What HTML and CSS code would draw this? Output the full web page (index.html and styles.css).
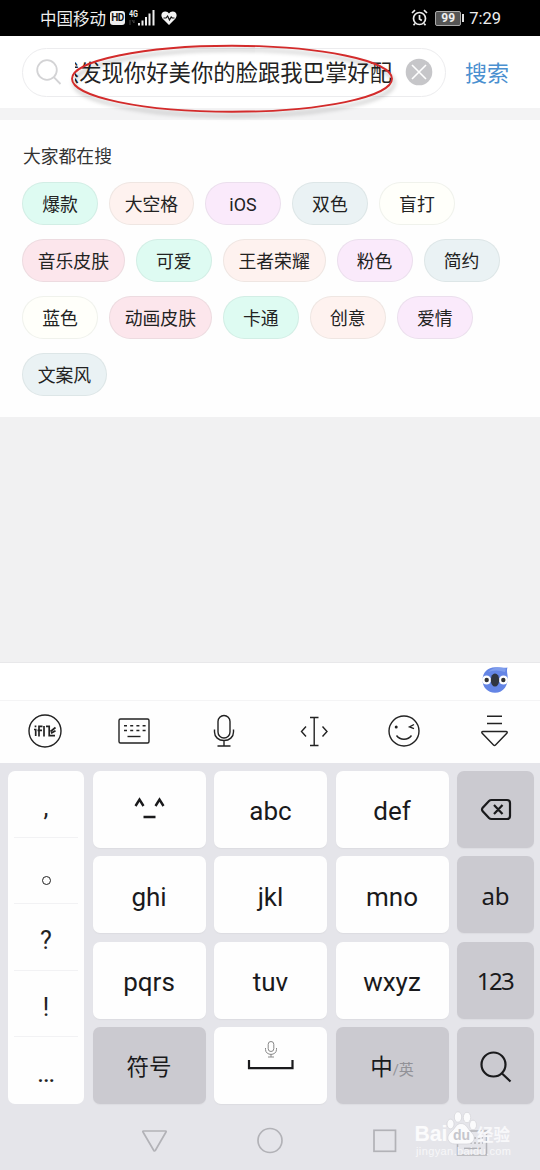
FILE: index.html
```html
<!DOCTYPE html>
<html lang="zh-CN">
<head>
<meta charset="utf-8">
<title>搜索</title>
<link rel="stylesheet" href="styles.css">
</head>
<body>
<div class="phone">
  <header class="status">
    <div class="status-left">
      <span class="carrier">中国移动</span>
      <span class="hd">HD</span>
      <svg class="signal" width="27" height="20" viewBox="0 0 27 20">
        <text x="0" y="8.5" class="net" textLength="9" lengthAdjust="spacingAndGlyphs">4G</text>
        <path d="M1 12v5M3 12l2 3M5 12v3" stroke="#444" fill="none"/>
        <path d="M10 15v2.500M13.500 12.500v5M17 9v8.500M20.500 5.500v12M24.500 2v15.500" stroke="#eee" stroke-width="2"/>
      </svg>
      <svg class="heart" width="16" height="15" viewBox="0 0 16 15">
        <path d="M8 14 1.500 7.500C-1 4 1 .5 4.300.5 6 .5 7.200 1.300 8 2.500 8.800 1.300 10 .5 11.700.5 15 .5 17 4 14.500 7.500Z" fill="#f4f4f4"/>
        <path d="M2.500 7H5l1.600-2L8.500 9l1.700-3 1 1h2.300" fill="none" stroke="#111" stroke-width="1.200"/>
      </svg>
    </div>
    <div class="status-right">
      <svg width="17" height="18" viewBox="0 0 17 18" fill="none" stroke="#eee" stroke-width="1.700">
        <circle cx="8.500" cy="9.500" r="6"/><path d="M8.500 6v4l2.300 1.500M1 4l3-2.800M16 4l-3-2.800M4 14.500l-1.500 1.800M13 14.500l1.500 1.800"/>
      </svg>
      <span class="battery">99</span><span class="battery-tip"></span>
      <span class="clock">7:29</span>
    </div>
  </header>

  <div class="search-bar">
    <div class="search-box">
      <svg class="search-icon" width="26" height="28" viewBox="0 0 26 28" fill="none" stroke="#d3d3d5" stroke-width="1.800">
        <circle cx="11" cy="12" r="9.800"/><path d="M17.800 19.200 24.500 26"/>
      </svg>
      <div class="query"><span>然发现你好美你的脸跟我巴掌好配</span></div>
      <svg class="clear" width="28" height="28" viewBox="0 0 28 28">
        <circle cx="14" cy="14" r="13.300" fill="#c6c6c9"/>
        <path d="m7 7 14 14M21 7 7 21" stroke="#fff" stroke-width="1.600"/>
      </svg>
    </div>
    <span class="search-action">搜索</span>
    <svg class="annotation" width="332" height="80" viewBox="0 0 332 80">
      <ellipse cx="162" cy="38.800" rx="160" ry="33" fill="none" stroke="#d32b2b" stroke-width="1.900"/>
    </svg>
  </div>

  <section class="hot">
    <h2>大家都在搜</h2>
    <div class="chips">
      <span class="chip mint">爆款</span><span class="chip peach">大空格</span><span class="chip lilac">iOS</span><span class="chip mist">双色</span><span class="chip ivory">盲打</span>
      <span class="chip rose">音乐皮肤</span><span class="chip mint">可爱</span><span class="chip peach">王者荣耀</span><span class="chip lilac">粉色</span><span class="chip mist">简约</span>
      <span class="chip ivory">蓝色</span><span class="chip rose">动画皮肤</span><span class="chip mint">卡通</span><span class="chip peach">创意</span><span class="chip lilac">爱情</span>
      <span class="chip mist">文案风</span>
    </div>
  </section>

  <div class="candidates">
    <svg width="28" height="28" viewBox="0 0 28 28">
      <path d="M26.500 1.500c-.8 2-.5 4 0 7.500 1.500 10-4 17.800-12.500 17.800C6.500 26.800 1.500 21 1.500 14 1.500 6 7 1.200 14 1.200c5 0 9 .8 12.500.3Z" fill="#6485e5"/>
      <path d="M25 2.500Q14-.5 7 6q8-3 17 0Z" fill="#7f9dec"/>
      <circle cx="5.500" cy="14" r="4.500" fill="#fff"/><circle cx="22.500" cy="14" r="4.500" fill="#fff"/>
      <circle cx="5.700" cy="14" r="2.200" fill="#333"/><circle cx="22.300" cy="14" r="2.200" fill="#333"/>
      <ellipse cx="14" cy="14" rx="4.200" ry="6.600" fill="#303540"/>
    </svg>
  </div>

  <nav class="toolbar">
    <svg viewBox="0 0 36 36"><circle cx="18" cy="18" r="16"/>
      <path stroke-width="1.700" d="M8.500 12.500v1.800M7 16.500h1.700V23M12 23.500V13.300h3.500M10.500 17.300h4.500M17 13v10.500M19 13.300h3.200v9.400H28M23.500 18.500l5-4M24 20.300l4.500-2.500"/></svg>
    <svg viewBox="0 0 36 36"><rect x="3" y="6" width="30" height="24" rx="1.500"/>
      <path d="M8 12.700h22M8 17.500h22" stroke-dasharray="3 3.200" stroke-width="1.600"/><path d="M11.500 23.500h13"/></svg>
    <svg viewBox="0 0 36 36"><rect x="12" y="2.500" width="12" height="22.500" rx="6"/><path d="M8.500 16.500v2.500c0 5 4 8.500 9.500 8.500s9.500-3.500 9.500-8.500v-2.500M18 27.500v5.500M11.500 33h13"/></svg>
    <svg viewBox="0 0 36 36"><path d="M14 4.500h8.500M14 32.500h8.500M18.200 4.500v28M10 13.500 5.500 18.500 10 23.500M26.500 13.500l4.500 5-4.500 5"/></svg>
    <svg viewBox="0 0 36 36"><circle cx="18" cy="18" r="15"/><path d="M10.500 22.500c3.500 5 11.500 5 15 0M28 11.500 23.500 14l4.500 1.700"/><circle cx="10.200" cy="14" r=".8" fill="#222"/></svg>
    <svg viewBox="0 0 36 36"><path d="M11 3.300h15M11 10.500h15M7 18.500h23q2 0 .8 1.800L19.500 32q-1 1-2 0L6.200 20.300Q5 18.500 7 18.500Z"/></svg>
  </nav>

  <main class="keyboard">
    <div class="keys">
      <div class="punctuation">
        <span>,</span><span><i class="full-stop"></i></span><span>?</span><span>!</span><span class="dots">...</span>
      </div>
      <button class="key"><svg class="face" width="32" height="28" viewBox="0 0 32 28" fill="none" stroke="#1a1a1c" stroke-width="2.400"><path d="m2.500 13 4-6.500 4 6.500M22.500 13l4-6.500 4 6.500M10.500 24h12"/></svg></button>
      <button class="key">abc</button>
      <button class="key">def</button>
      <button class="key dark"><svg width="32" height="28" viewBox="0 0 32 28" fill="none" stroke="#1a1a1c" stroke-width="2.200"><path d="M11.500 4H27q3 0 3 3v13q0 3-3 3H11.500q-1.500 0-2.500-1L2.500 15q-1-1.500 0-3L9 5q1-1 2.500-1ZM14 9l8.500 9M22.500 9 14 18"/></svg></button>
      <button class="key">ghi</button>
      <button class="key">jkl</button>
      <button class="key">mno</button>
      <button class="key dark side">ab</button>
      <button class="key">pqrs</button>
      <button class="key">tuv</button>
      <button class="key">wxyz</button>
      <button class="key dark side digits">123</button>
      <button class="key dark cjk">符号</button>
      <button class="key"><svg class="space" width="48" height="34" viewBox="0 0 48 34" fill="none"><rect x="21.200" y="1.500" width="5.600" height="10" rx="2.800" stroke="#888"/><path d="M18.500 8v1.500c0 6.500 11 6.500 11 0V8M24 14v3M21 17h6" stroke="#888"/><path d="M2 20v8.200h43.500V20" stroke="#1a1a1c" stroke-width="2.200"/></svg></button>
      <button class="key dark cjk">中<small>/英</small></button>
      <button class="key dark"><svg width="34" height="34" viewBox="0 0 34 34" fill="none" stroke="#1a1a1c" stroke-width="2.200"><circle cx="14.500" cy="14.500" r="12"/><path d="m23 23.500 8.500 8"/></svg></button>
    </div>
    <div class="system-nav">
      <svg width="540" height="65" viewBox="0 0 540 65" fill="none" stroke="#b2b2b7" stroke-width="1.700">
        <path d="M143.500 27h22q1 0 .5 1L155.300 46.500q-.8 1-1.500 0L143 28q-.5-1 .5-1Z"/>
        <circle cx="270" cy="36.500" r="12"/>
        <rect x="374" y="26.300" width="21.500" height="21"/>
        <rect x="457.500" y="27" width="29" height="24" stroke-width="1.500"/>
        <path d="M462 34h21M462 39h21" stroke-dasharray="2 2"/><path d="M464 44.500h17"/>
      </svg>
      <svg class="watermark" width="110" height="58" viewBox="0 0 110 58">
        <g fill="#fbfbfc" stroke="#cfcfd4" stroke-width=".6">
          <ellipse cx="39.500" cy="20" rx="3.500" ry="4.800"/><ellipse cx="47" cy="13" rx="3.700" ry="5.200"/><ellipse cx="56" cy="13.500" rx="3.700" ry="5.200"/><ellipse cx="62" cy="21" rx="3.500" ry="4.800"/>
          <path d="M50 19.500c5 0 6.500 5 10 8.500 6 5 3 12-4 12H44c-7 0-10-7-4-12 4-3 5-8.500 10-8.500Z"/>
        </g>
        <text x="3.500" y="37" class="wm-brand" textLength="33" lengthAdjust="spacingAndGlyphs">Bai</text>
        <text x="66" y="36.500" class="wm-cjk">经验</text>
        <text x="42" y="36" class="wm-du">du</text>
        <text x="5" y="50.500" class="wm-url" textLength="95">jingyan.baidu.com</text>
      </svg>
    </div>
  </main>
</div>
</body>
</html>
```
FILE: styles.css
```css
* { box-sizing: border-box; }
body { margin: 0; font-family: Roboto, "Noto Sans CJK SC", sans-serif; color: #222; }
.phone { width: 540px; height: 1170px; display: flex; flex-direction: column; overflow: hidden; background: #f1f1f2; }

.status { height: 36px; flex: none; background: #000; color: #eee; display: flex; justify-content: space-between; padding: 0 39px 0 40px; }
.status-left, .status-right { display: flex; align-items: center; }
.carrier { font-size: 16.5px; line-height: 34px; padding-top: 3px; }
.hd { margin-left: 4px; width: 15px; height: 14px; border-radius: 3px; background: #eee; color: #111; font-size: 10px; font-weight: 700; line-height: 14px; text-align: center; letter-spacing: -.5px; }
.signal { margin-left: 4px; }
.heart { margin-left: 5px; }
.net { font: 700 8.500px Roboto, sans-serif; fill: #eee; }
.battery { margin-left: 7px; width: 26px; height: 15px; border: 1px solid #aaa; background: #555; border-radius: 2px; font-size: 12px; font-weight: 700; line-height: 13px; text-align: center; }
.battery-tip { width: 2px; height: 8px; background: #ddd; margin-left: 1px; }
.clock { margin-left: 5px; font-size: 16.500px; padding-top: 1px; }

.search-bar { position: relative; height: 84px; flex: none; background: #fff; border-bottom: 12px solid #f3f3f4; display: flex; align-items: center; padding: 0 31px 0 22px; justify-content: space-between; }
.search-box { width: 424px; height: 49px; border: 1px solid #ececee; border-radius: 25px; display: flex; align-items: center; padding: 0 12px 0 13px; }
.search-icon { flex: none; }
.query { margin-left: 13px; width: 317px; overflow: hidden; display: flex; justify-content: flex-end; white-space: nowrap; font-size: 22.350px; line-height: 34px; padding-top: 2px; flex: none; }
.clear { margin-left: 13px; flex: none; }
.search-action { color: #4a90d0; font-size: 22px; line-height: 32px; padding-top: 3px; }
.annotation { position: absolute; left: 70px; top: 4px; filter: drop-shadow(2px 4px 2px rgba(0, 0, 0, .3)); }

.hot { height: 297px; flex: none; background: #fefefe; padding: 24px 22px 0; }
.hot h2 { margin: 0 0 12px; font-size: 17.800px; font-weight: 400; line-height: 26px; color: #333; padding-left: 1px; }
.chips { display: flex; flex-wrap: wrap; gap: 14px 11px; }
.chip { min-width: 76px; height: 43px; padding: 0 14.700px; border: 1px solid rgba(110, 130, 120, .1); border-radius: 22px; font-size: 17.850px; line-height: 43px; text-align: center; }
.mint { background: #defbf2; }
.peach { background: #fef2ef; }
.lilac { background: #faeafb; }
.mist { background: #eaf2f4; }
.ivory { background: #fffffa; }
.rose { background: #fce6ec; }

.candidates { margin-top: 245px; height: 38px; flex: none; background: #fff; border-top: 1px solid #e8e8ea; display: flex; justify-content: flex-end; padding: 3px 31px 0 0; }
.toolbar { height: 63px; flex: none; background: #fefefe; border-top: 1px solid #f4f4f5; display: flex; justify-content: space-between; align-items: center; padding: 0 28px 2px 26.500px; }
.toolbar svg { width: 36px; height: 36px; fill: none; stroke: #222; stroke-width: 1.400; }

.keyboard { flex: 1; background: #e5e5ea; display: flex; flex-direction: column; padding-top: 8px; }
.keys { height: 333px; flex: none; display: grid; grid-template-columns: 76px 113px 113px 113px 77px; grid-template-rows: repeat(4, 1fr); gap: 8.500px; padding: 0 7px 0 8px; justify-content: space-between; }
.punctuation { grid-row: span 4; background: #fefefe; border-radius: 7px; display: grid; grid-template-rows: repeat(5, 1fr); font-size: 25px; padding: 0 6px; }
.punctuation span { display: flex; align-items: center; justify-content: center; border-bottom: 1px solid #f2f2f4; padding-top: 7px; }
.punctuation .dots { border: 0; font-size: 22px; font-weight: 500; letter-spacing: -.5px; }
.full-stop { width: 9px; height: 9px; border: 1.800px solid #222; border-radius: 50%; margin-top: 13px; }
.key { border: 0; padding: 4px 0 0; border-radius: 7px; background: #fefefe; color: #1a1a1c; font: 26px/1 Roboto, "Noto Sans CJK SC", sans-serif; display: flex; align-items: center; justify-content: center; box-shadow: 0 1px 1px #dcdce1; }
.dark { background: #cbcad0; padding-top: 2px; }
.side { font-family: "Noto Sans", sans-serif; font-size: 24px; }
.key.digits { letter-spacing: -1.500px; padding: 1px 1px 0 0; }
.key.cjk { font-size: 22.500px; padding-top: 4px; }
.key small { font-size: 15px; color: #929298; padding-top: 5px; }
.face { margin-top: -9px; }
.space { margin-top: -22px; }
.system-nav { position: relative; flex: 1; }
.system-nav svg { display: block; }
.system-nav .watermark { position: absolute; left: 411px; top: 0; }
.wm-brand { font: 700 22px "Liberation Sans", sans-serif; fill: #fbfbfc; }
.wm-cjk { font: 700 16.500px "Noto Sans CJK SC", sans-serif; fill: #f8f8fa; }
.wm-du { font: 700 14px "Liberation Sans", sans-serif; fill: #c6c6cc; }
.wm-url { font: 11px "Liberation Sans", sans-serif; fill: #f7f7f9; }
```
